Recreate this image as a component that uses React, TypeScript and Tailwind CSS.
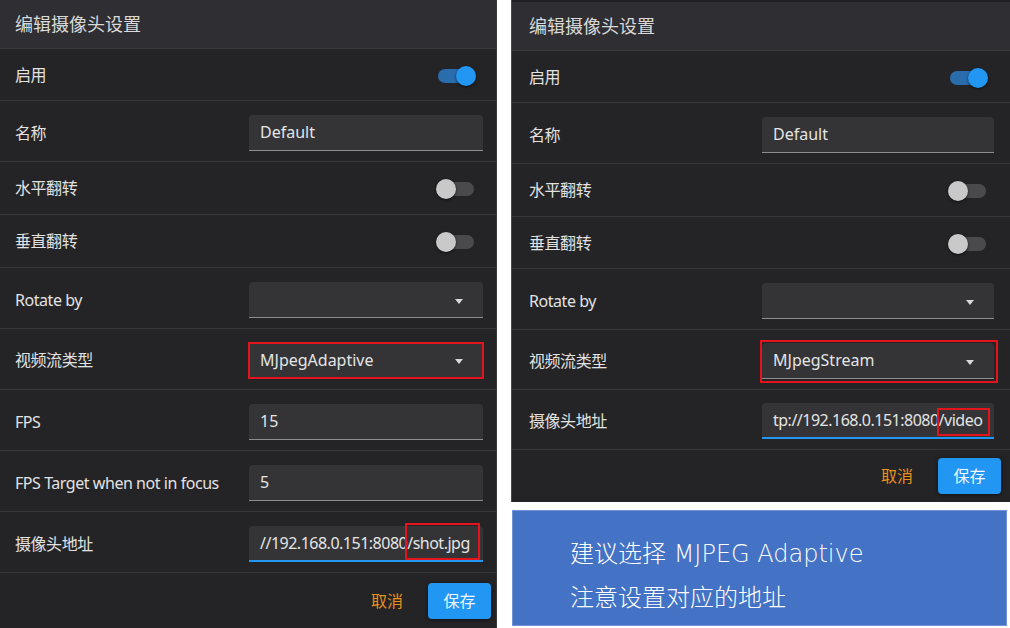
import type { ReactNode } from 'react';

const font = "font-['Noto_Sans','Noto_Sans_CJK_SC',sans-serif]";

function Toggle({ on = false }: { on?: boolean }) {
  return (
    <div className="relative w-[40px] h-[20px] shrink-0 mt-[2px]">
      <div
        className={
          'absolute left-[2px] right-[2px] top-[3px] h-[14px] rounded-full ' +
          (on ? 'bg-[#2a6dad]' : 'bg-[#4a4a4d]')
        }
      />
      <div
        className={
          'absolute top-0 w-[20px] h-[20px] rounded-full shadow-[0_1px_3px_rgba(0,0,0,0.6)] ' +
          (on ? 'right-0 bg-[#2196f3]' : 'left-0 bg-[#c9c9c9]')
        }
      />
    </div>
  );
}

function Field({
  children,
  focused = false,
  select = false,
  w,
  marked = false,
}: {
  children?: ReactNode;
  focused?: boolean;
  select?: boolean;
  w: string;
  marked?: boolean;
}) {
  return (
    <div
      className={
        'relative h-[36px] shrink-0 flex items-center pl-[11px] rounded-t-[4px] bg-[#343437] text-[16px] text-[#e4e4e4] whitespace-nowrap ' +
        (select ? 'pr-[20px] ' : 'pr-[2px] ') +
        (focused ? 'border-b-2 border-[#2196f3] tracking-[-0.5px] ' : 'border-b border-[#8d8d8f] ') +
        w
      }
    >
      <span className="flex-1">{children}</span>
      {select && (
        <span className="w-0 h-0 mt-[4px] border-l-[4px] border-r-[4px] border-t-[5px] border-l-transparent border-r-transparent border-t-[#d9d9d9]" />
      )}
      {marked && <div className="absolute left-[-1px] right-[-1px] top-0 bottom-[-2px] border-2 border-[#e3141c]" />}
    </div>
  );
}

function Mark({ children, top, bottom, right }: { children: ReactNode; top: string; bottom: string; right: string }) {
  return (
    <span className="relative">
      {children}
      <span className={'absolute left-[-2px] border-2 border-[#e3141c] ' + top + ' ' + bottom + ' ' + right} />
    </span>
  );
}

function Row({ label, h, pl, pr, children }: { label: string; h: string; pl: string; pr: string; children: ReactNode }) {
  return (
    <div className={'flex items-center justify-between border-b border-[#37373a] ' + h + ' ' + pl + ' ' + pr}>
      <span className="text-[16px] tracking-[-0.45px] text-[#e2e2e2]">{label}</span>
      {children}
    </div>
  );
}

function Footer({ h, pr }: { h: string; pr: string }) {
  return (
    <div className={'flex items-center justify-end gap-[25px] ' + h + ' ' + pr}>
      <span className="text-[16px] text-[#e8901c]">取消</span>
      <button className="w-[63px] h-[36px] rounded-[4px] bg-[#2196f3] text-[16px] text-[#f2f8ff] shadow-[0_1px_4px_rgba(0,0,0,0.5)]">
        保存
      </button>
    </div>
  );
}

export default function App() {
  return (
    <div className={'w-[1010px] h-[628px] bg-white flex gap-[14px] overflow-hidden ' + font}>
      {/* left dialog */}
      <div className="w-[497px] h-[628px] bg-[#242427] border-r border-[#3a3a3d] flex flex-col shrink-0">
        <div className="h-[49px] bg-[#2f2f33] border-b border-[#3a3a3d] flex items-center pl-[15px] text-[18px] text-[#d9d9d9]">
          编辑摄像头设置
        </div>
        <Row label="启用" h="h-[52px]" pl="pl-[15px]" pr="pr-[20px]">
          <Toggle on />
        </Row>
        <Row label="名称" h="h-[61px] pt-[3px]" pl="pl-[15px]" pr="pr-[13px]">
          <Field w="w-[234px]">Default</Field>
        </Row>
        <Row label="水平翻转" h="h-[53px]" pl="pl-[15px]" pr="pr-[20px]">
          <Toggle />
        </Row>
        <Row label="垂直翻转" h="h-[53px]" pl="pl-[15px]" pr="pr-[20px]">
          <Toggle />
        </Row>
        <Row label="Rotate by" h="h-[61px] pt-[3px]" pl="pl-[15px]" pr="pr-[13px]">
          <Field w="w-[234px]" select />
        </Row>
        <Row label="视频流类型" h="h-[61px] pt-[2px]" pl="pl-[15px]" pr="pr-[13px]">
          <Field w="w-[234px]" select marked>
            MJpegAdaptive
          </Field>
        </Row>
        <Row label="FPS" h="h-[61px] pt-[3px]" pl="pl-[15px]" pr="pr-[13px]">
          <Field w="w-[234px]">15</Field>
        </Row>
        <Row label="FPS Target when not in focus" h="h-[61px] pt-[3px]" pl="pl-[15px]" pr="pr-[13px]">
          <Field w="w-[234px]">5</Field>
        </Row>
        <Row label="摄像头地址" h="h-[61px] pt-[3px]" pl="pl-[15px]" pr="pr-[13px]">
          <Field w="w-[234px]" focused>
            //192.168.0.151:8080
            <Mark top="top-[-9px]" bottom="bottom-[-6px]" right="right-[-10px]">
              /shot.jpg
            </Mark>
          </Field>
        </Row>
        <Footer h="h-[55px]" pr="pr-[5px]" />
      </div>

      {/* right column */}
      <div className="w-[499px] shrink-0 flex flex-col">
        <div className="h-[502px] bg-[#1f1f21] pt-[2px] border-l border-[#48484b] flex flex-col">
          <div className="h-[49px] bg-[#2f2f33] border-b border-[#3a3a3d] flex items-center pl-[17px] text-[18px] text-[#d9d9d9]">
            编辑摄像头设置
          </div>
          <div className="flex-1 bg-[#242427] flex flex-col">
            <Row label="启用" h="h-[52px]" pl="pl-[17px]" pr="pr-[22px]">
              <Toggle on />
            </Row>
            <Row label="名称" h="h-[61px] pt-[3px]" pl="pl-[17px]" pr="pr-[16px]">
              <Field w="w-[232px]">Default</Field>
            </Row>
            <Row label="水平翻转" h="h-[53px]" pl="pl-[17px]" pr="pr-[22px]">
              <Toggle />
            </Row>
            <Row label="垂直翻转" h="h-[52px]" pl="pl-[17px]" pr="pr-[22px]">
              <Toggle />
            </Row>
            <Row label="Rotate by" h="h-[61px] pt-[3px]" pl="pl-[17px]" pr="pr-[16px]">
              <Field w="w-[232px]" select />
            </Row>
            <Row label="视频流类型" h="h-[60px] pt-[2px]" pl="pl-[17px]" pr="pr-[16px]">
              <div className="relative">
                <Field w="w-[232px]" select>
                  MJpegStream
                </Field>
                <div className="absolute left-[-2px] right-[-4px] top-[-3px] bottom-[-4px] border-2 border-[#e3141c]" />
              </div>
            </Row>
            <Row label="摄像头地址" h="h-[60px] pt-[2px]" pl="pl-[17px]" pr="pr-[16px]">
              <Field w="w-[232px]" focused>
                tp://192.168.0.151:8080
                <Mark top="top-[-1px]" bottom="bottom-[-5px]" right="right-[-8px]">
                  /video
                </Mark>
              </Field>
            </Row>
            <Footer h="h-[52px]" pr="pr-[9px]" />
          </div>
        </div>

        <div className="mt-[8px] ml-[1px] w-[495px] h-[116px] bg-[#4472c4] border border-[#6f93d4] pl-[57px] pt-[25px] flex flex-col gap-[8px] text-[24px] leading-[36px] text-white font-light font-['DejaVu_Sans','Noto_Sans_CJK_SC',sans-serif]">
          <div>建议选择 MJPEG Adaptive</div>
          <div>注意设置对应的地址</div>
        </div>
      </div>
    </div>
  );
}
